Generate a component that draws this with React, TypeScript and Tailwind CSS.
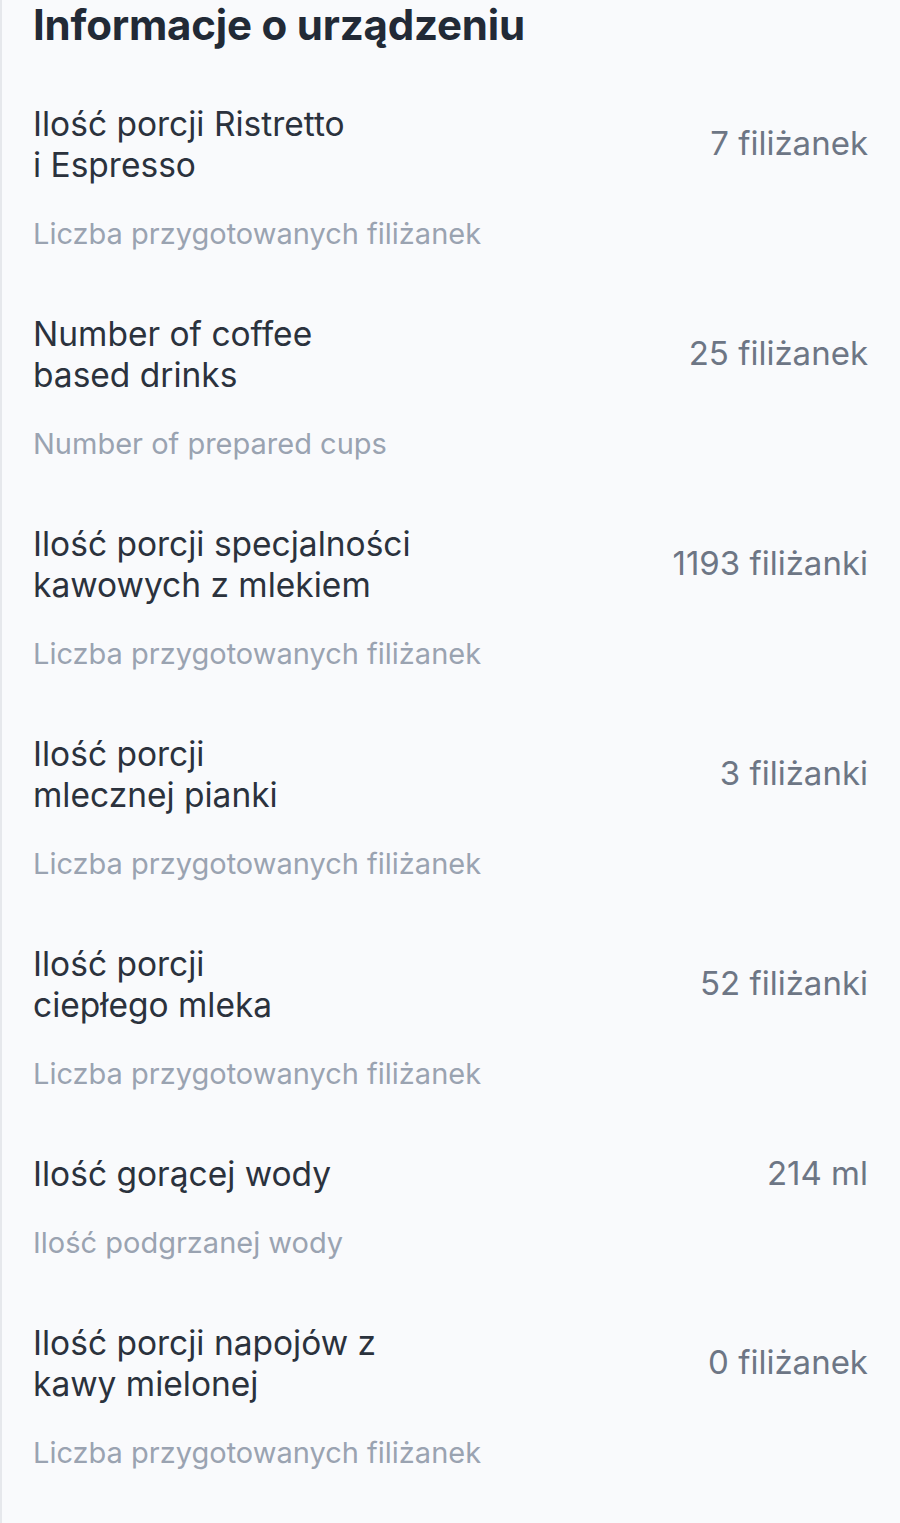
import React from 'react';

interface StatRow {
  label: string[];
  value: string;
  hint: string;
}

const CUPS = 'Liczba przygotowanych filiżanek';

const rows: StatRow[] = [
  { label: ['Ilość porcji Ristretto', 'i Espresso'], value: '7 filiżanek', hint: CUPS },
  { label: ['Number of coffee', 'based drinks'], value: '25 filiżanek', hint: 'Number of prepared cups' },
  { label: ['Ilość porcji specjalności', 'kawowych z mlekiem'], value: '1193 filiżanki', hint: CUPS },
  { label: ['Ilość porcji', 'mlecznej pianki'], value: '3 filiżanki', hint: CUPS },
  { label: ['Ilość porcji', 'ciepłego mleka'], value: '52 filiżanki', hint: CUPS },
  { label: ['Ilość gorącej wody'], value: '214 ml', hint: 'Ilość podgrzanej wody' },
  { label: ['Ilość porcji napojów z', 'kawy mielonej'], value: '0 filiżanek', hint: CUPS },
];

const StatItem: React.FC<{ row: StatRow }> = ({ row }) => (
  <li className="flex flex-col gap-[30px]">
    <div className="flex items-center justify-between">
      <p className="text-[33.5px] leading-[41px] text-[#2b323d]">
        {row.label.map((line, i) => (
          <React.Fragment key={i}>
            {i > 0 && <br />}
            {line}
          </React.Fragment>
        ))}
      </p>
      <span className="-mt-[3px] text-[33px] leading-[41px] text-[#6d7685]">{row.value}</span>
    </div>
    <p className="text-[29px] leading-[36px] text-[#9aa3b1]">{row.hint}</p>
  </li>
);

export default function App() {
  return (
    <div
      className="min-h-[1523px] w-[900px] border-l-2 border-[#e6e8ec] bg-[#f9fafc] pl-[31px] pr-[32px]"
      style={{ fontFamily: 'Inter, "Noto Sans", sans-serif' }}
    >
      <h1 className="text-[42px] font-bold leading-[50px] tracking-[-0.2px] text-[#222a36]">
        Informacje o urządzeniu
      </h1>
      <ul className="mt-[54px] flex flex-col gap-[62px]">
        {rows.map((row, i) => (
          <StatItem key={i} row={row} />
        ))}
      </ul>
    </div>
  );
}
